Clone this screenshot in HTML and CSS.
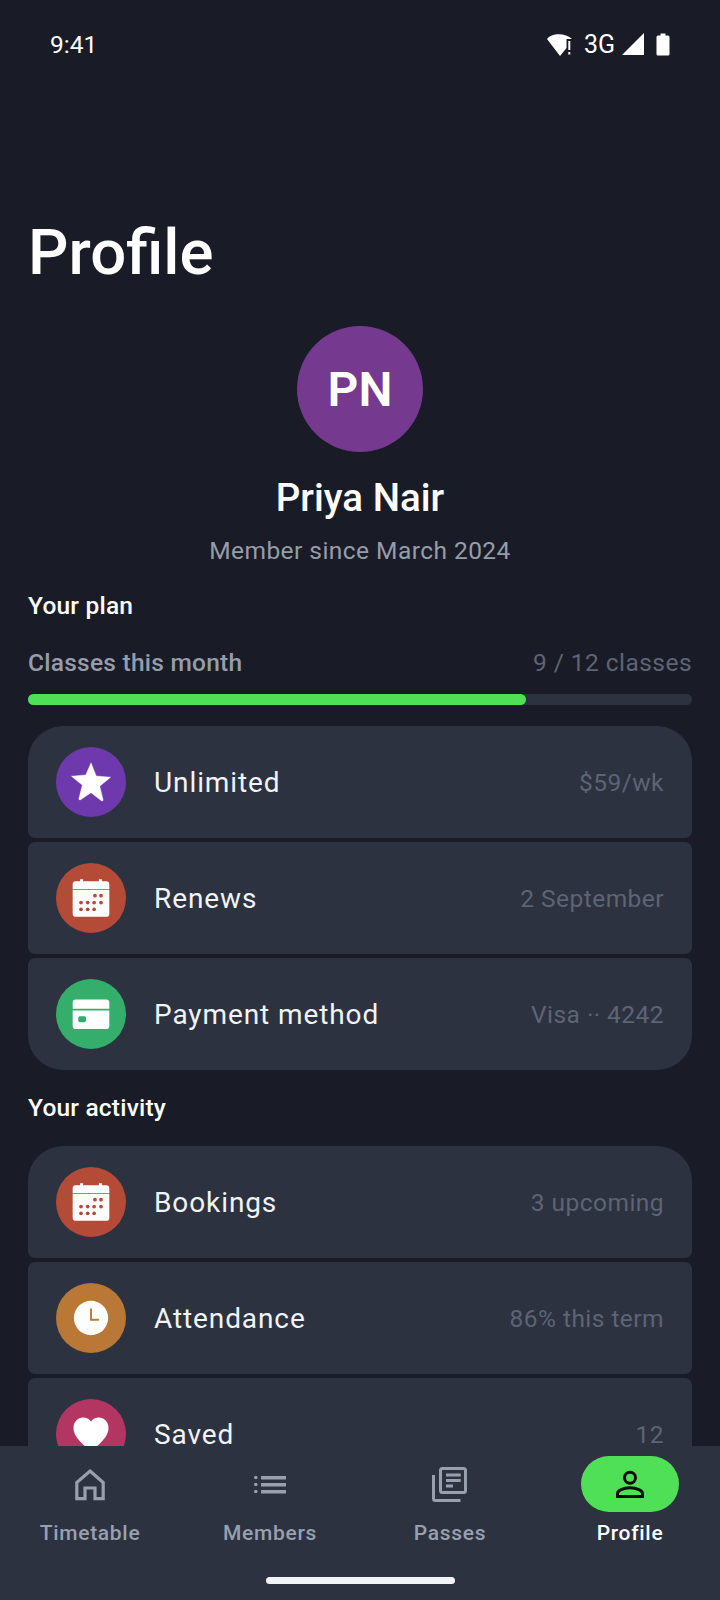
FILE: index.html
```html
<!DOCTYPE html>
<html lang="en">
<head>
  <meta charset="UTF-8">
  <meta name="viewport" content="width=device-width, initial-scale=1.0">
  <title>Profile</title>
  <link rel="stylesheet" href="styles.css">
</head>
<body>
  <div class="phone">
    <div class="status-bar">
      <span class="clock">9:41</span>
      <div class="status-icons">
        <svg class="wifi" width="28" height="24" viewBox="0 0 28 24"><path d="M1 7C5 .5 20 .5 26 7h-5.500v9l-6.500 8z" fill="#fff"/><rect x="22.300" y="9" width="2" height="9" fill="#fff"/><rect x="22.300" y="20" width="2" height="2.500" fill="#fff"/></svg>
        <span class="net">3G</span>
        <svg class="signal" width="22" height="24" viewBox="0 0 22 24"><path d="M22 1v22H0z" fill="#fff"/></svg>
        <svg class="battery" width="14" height="24" viewBox="0 0 14 24"><path d="M4.500 1.500h5V3.500h2.500a1.500 1.500 0 0 1 1.500 1.500v17a1.500 1.500 0 0 1-1.500 1.500H2A1.500 1.500 0 0 1 .5 22V5A1.500 1.500 0 0 1 2 3.500h2.500z" fill="#fff"/></svg>
      </div>
    </div>

    <div class="content">
      <h1 class="page-title">Profile</h1>

      <div class="member">
        <div class="avatar">PN</div>
        <div class="member-name">Priya Nair</div>
        <div class="member-since">Member since March 2024</div>
      </div>

      <h2 class="section-title">Your plan</h2>
      <div class="usage">
        <span class="usage-label">Classes this month</span>
        <span class="usage-count">9 / 12 classes</span>
      </div>
      <div class="bar"><div class="bar-fill" style="width: 75%"></div></div>

      <div class="card-list">
        <div class="row">
          <div class="dot dot-purple">
            <svg width="50" height="50" viewBox="0 0 24 24"><path d="M12 2.800l2.500 6.300 6.900.6-5.200 4.300 1.600 6.500a.5.500 0 0 1-.8.5L12 17.100l-5 3.400a.5.500 0 0 1-.8-.5l1.600-6.500-5.200-4.300 6.900-.6z" fill="#fff" stroke="#fff" stroke-width=".2" stroke-linejoin="round"/></svg>
          </div>
          <span class="row-label">Unlimited</span>
          <span class="row-value">$59/wk</span>
        </div>
        <div class="row">
          <div class="dot dot-red">
            <svg width="50" height="50" viewBox="0 0 24 24"><use href="#cal"/></svg>
          </div>
          <span class="row-label">Renews</span>
          <span class="row-value">2 September</span>
        </div>
        <div class="row">
          <div class="dot dot-green">
            <svg width="50" height="50" viewBox="0 0 24 24"><path d="M4.700 5h14.600a1.500 1.500 0 0 1 1.500 1.500v3H3.200v-3A1.500 1.500 0 0 1 4.700 5zM3.200 10.300h17.600v7.400a1.500 1.500 0 0 1-1.500 1.500H4.700a1.500 1.500 0 0 1-1.500-1.500z" fill="#fff"/><rect x="5.900" y="13.100" width="3.700" height="2.800" rx=".8" fill="#35ad6b"/></svg>
          </div>
          <span class="row-label">Payment method</span>
          <span class="row-value">Visa ·· 4242</span>
        </div>
      </div>

      <h2 class="section-title section-activity">Your activity</h2>

      <div class="card-list">
        <div class="row">
          <div class="dot dot-red">
            <svg width="50" height="50" viewBox="0 0 24 24"><use href="#cal"/></svg>
          </div>
          <span class="row-label">Bookings</span>
          <span class="row-value">3 upcoming</span>
        </div>
        <div class="row">
          <div class="dot dot-orange">
            <svg width="42" height="42" viewBox="0 0 24 24"><circle cx="12" cy="12" r="9.800" fill="#fff"/><path d="M12 6.500V13h4.500" fill="none" stroke="#b97835" stroke-width="1.100"/></svg>
          </div>
          <span class="row-label">Attendance</span>
          <span class="row-value">86% this term</span>
        </div>
        <div class="row">
          <div class="dot dot-pink">
            <svg width="42" height="42" viewBox="0 0 24 24"><path d="M12 22C7 17.500 2 13.500 2 8.500 2 5 4.500 2.500 7.500 2.500c1.800 0 3.500.9 4.500 2.300 1-1.400 2.700-2.300 4.500-2.300C19.500 2.500 22 5 22 8.500c0 5-5 9-10 13.500z" fill="#fff"/></svg>
          </div>
          <span class="row-label">Saved</span>
          <span class="row-value">12</span>
        </div>
      </div>
    </div>

    <nav class="nav">
      <div class="nav-item">
        <div class="nav-icon">
          <svg width="42" height="42" viewBox="0 0 42 42"><path d="M21 8L34.200 19.500v16.200h-8.200V25h-10v10.700H7.800V19.500z" fill="none" stroke="#98a0b0" stroke-width="3.200"/></svg>
        </div>
        <span class="nav-label">Timetable</span>
      </div>
      <div class="nav-item">
        <div class="nav-icon">
          <svg width="42" height="42" viewBox="0 0 42 42" fill="#98a0b0"><circle cx="6.800" cy="14.500" r="1.800"/><circle cx="6.800" cy="21.500" r="1.800"/><circle cx="6.800" cy="28.500" r="1.800"/><rect x="12" y="13" width="25" height="3.500"/><rect x="12" y="20" width="25" height="3.500"/><rect x="12" y="27" width="25" height="3.500"/></svg>
        </div>
        <span class="nav-label">Members</span>
      </div>
      <div class="nav-item">
        <div class="nav-icon">
          <svg width="42" height="42" viewBox="0 0 42 42" fill="none" stroke="#98a0b0" stroke-width="3"><rect x="11.500" y="5.500" width="25" height="24" rx="2"/><path d="M4.500 12v23.500a2 2 0 0 0 2 2h25"/><path d="M17 12h14.700M17 17.500h14.700M17 23h7"/></svg>
        </div>
        <span class="nav-label">Passes</span>
      </div>
      <div class="nav-item nav-active">
        <div class="nav-icon">
          <svg width="42" height="42" viewBox="0 0 42 42" fill="none" stroke="#0a0d0a" stroke-width="3"><circle cx="21" cy="14.700" r="5.500"/><path d="M8.500 33.500v-2.500c0-2 1.200-3.400 3-4.200 3-1.300 6-2 9.500-2s6.500.7 9.500 2c1.800.8 3 2.200 3 4.200v2.500z"/></svg>
        </div>
        <span class="nav-label">Profile</span>
      </div>
      <div class="home-pill"></div>
    </nav>
  </div>

  <svg class="defs" width="0" height="0">
    <defs>
      <g id="cal">
        <path d="M6.800 3h1.400v1h7.600V3h1.400v1h2.100a1.500 1.500 0 0 1 1.500 1.500v2.300H3.200V5.500A1.500 1.500 0 0 1 4.700 4h2.100zM3.200 8.200h17.600v11.300a1.500 1.500 0 0 1-1.500 1.500H4.700a1.500 1.500 0 0 1-1.500-1.500z" fill="#fff"/>
        <g fill="#b44b37">
          <circle cx="13.900" cy="10.900" r=".9"/><circle cx="16.800" cy="10.900" r=".9"/>
          <circle cx="7.200" cy="14.200" r=".9"/><circle cx="10.400" cy="14.200" r=".9"/><circle cx="13.500" cy="14.200" r=".9"/><circle cx="16.800" cy="14.200" r=".9"/>
          <circle cx="7.200" cy="17.400" r=".9"/><circle cx="10.400" cy="17.400" r=".9"/><circle cx="13.500" cy="17.400" r=".9"/>
        </g>
      </g>
    </defs>
  </svg>
</body>
</html>
```
FILE: styles.css
```css
* {
  box-sizing: border-box;
}
body {
  margin: 0;
  background: #191c27;
  font-family: Roboto, sans-serif;
  color: #fff;
}
.defs {
  position: absolute;
}
.phone {
  width: 720px;
  height: 1600px;
  display: flex;
  flex-direction: column;
  overflow: hidden;
}
.status-bar {
  height: 88px;
  flex: none;
  display: flex;
  align-items: center;
  justify-content: space-between;
  padding: 0 50px;
}
.clock {
  font-size: 24.500px;
}
.status-icons {
  display: flex;
  align-items: center;
}
.net {
  margin-left: 10px;
  font-size: 25px;
}
.signal {
  margin-left: 7px;
}
.battery {
  margin-left: 12px;
}
.content {
  flex: 1;
  min-height: 0;
  overflow: hidden;
  padding: 0 28px;
}
.page-title {
  margin: 125px 0 0;
  font-size: 63.500px;
  font-weight: 500;
  line-height: 80px;
}
.member {
  display: flex;
  flex-direction: column;
  align-items: center;
  margin-top: 33px;
}
.avatar {
  width: 126px;
  height: 126px;
  border-radius: 50%;
  background: #753a8f;
  display: flex;
  align-items: center;
  justify-content: center;
  font-size: 48px;
  font-weight: 600;
}
.member-name {
  margin-top: 21px;
  font-size: 38.500px;
  font-weight: 500;
  line-height: 50px;
}
.member-since {
  margin-top: 11px;
  font-size: 24.500px;
  letter-spacing: .45px;
  line-height: 34px;
  color: #969ca8;
}
.section-title {
  margin: 21px 0 0;
  font-size: 24.500px;
  font-weight: 500;
  letter-spacing: .2px;
  line-height: 34px;
}
.usage {
  display: flex;
  justify-content: space-between;
  align-items: center;
  margin-top: 23px;
  font-size: 24.500px;
  line-height: 34px;
}
.usage-label {
  color: #969ca8;
  font-weight: 500;
  letter-spacing: .25px;
}
.usage-count {
  color: #5d6474;
  letter-spacing: .45px;
}
.bar {
  height: 11px;
  margin-top: 14px;
  border-radius: 6px;
  background: #2c3240;
}
.bar-fill {
  height: 100%;
  border-radius: 6px;
  background: #50e057;
}
.card-list {
  display: flex;
  flex-direction: column;
  gap: 4px;
  margin-top: 21px;
}
.row {
  height: 112px;
  flex: none;
  display: flex;
  align-items: center;
  padding: 0 28px;
  background: #2c3240;
  border-radius: 7px;
}
.row:first-child {
  border-radius: 35px 35px 7px 7px;
}
.row:last-child {
  border-radius: 7px 7px 35px 35px;
}
.dot {
  width: 70px;
  height: 70px;
  flex: none;
  border-radius: 50%;
  display: flex;
  align-items: center;
  justify-content: center;
}
.dot-purple {
  background: #6f39ae;
}
.dot-red {
  background: #b44b37;
}
.dot-green {
  background: #35ad6b;
}
.dot-orange {
  background: #b97835;
}
.dot-pink {
  background: #b33662;
}
.row-label {
  margin-left: 28px;
  flex: 1;
  font-size: 28px;
  letter-spacing: .9px;
  color: #f1f3f7;
}
.row-value {
  font-size: 24.500px;
  letter-spacing: .45px;
  color: #5d6474;
}
.nav {
  position: relative;
  height: 154px;
  flex: none;
  display: flex;
  padding: 10px 0 0;
  background: #2c3240;
}
.nav-item {
  flex: 1;
  display: flex;
  flex-direction: column;
  align-items: center;
}
.nav-icon {
  width: 98px;
  height: 56px;
  border-radius: 28px;
  display: flex;
  align-items: center;
  justify-content: center;
}
.nav-label {
  margin-top: 7px;
  font-size: 21px;
  font-weight: 500;
  letter-spacing: .7px;
  line-height: 28px;
  color: #98a0b0;
}
.nav-active .nav-icon {
  background: #50e057;
}
.nav-active .nav-label {
  color: #fff;
}
.home-pill {
  position: absolute;
  left: 266px;
  bottom: 16px;
  width: 189px;
  height: 7px;
  border-radius: 4px;
  background: #f1f3f7;
}
```
